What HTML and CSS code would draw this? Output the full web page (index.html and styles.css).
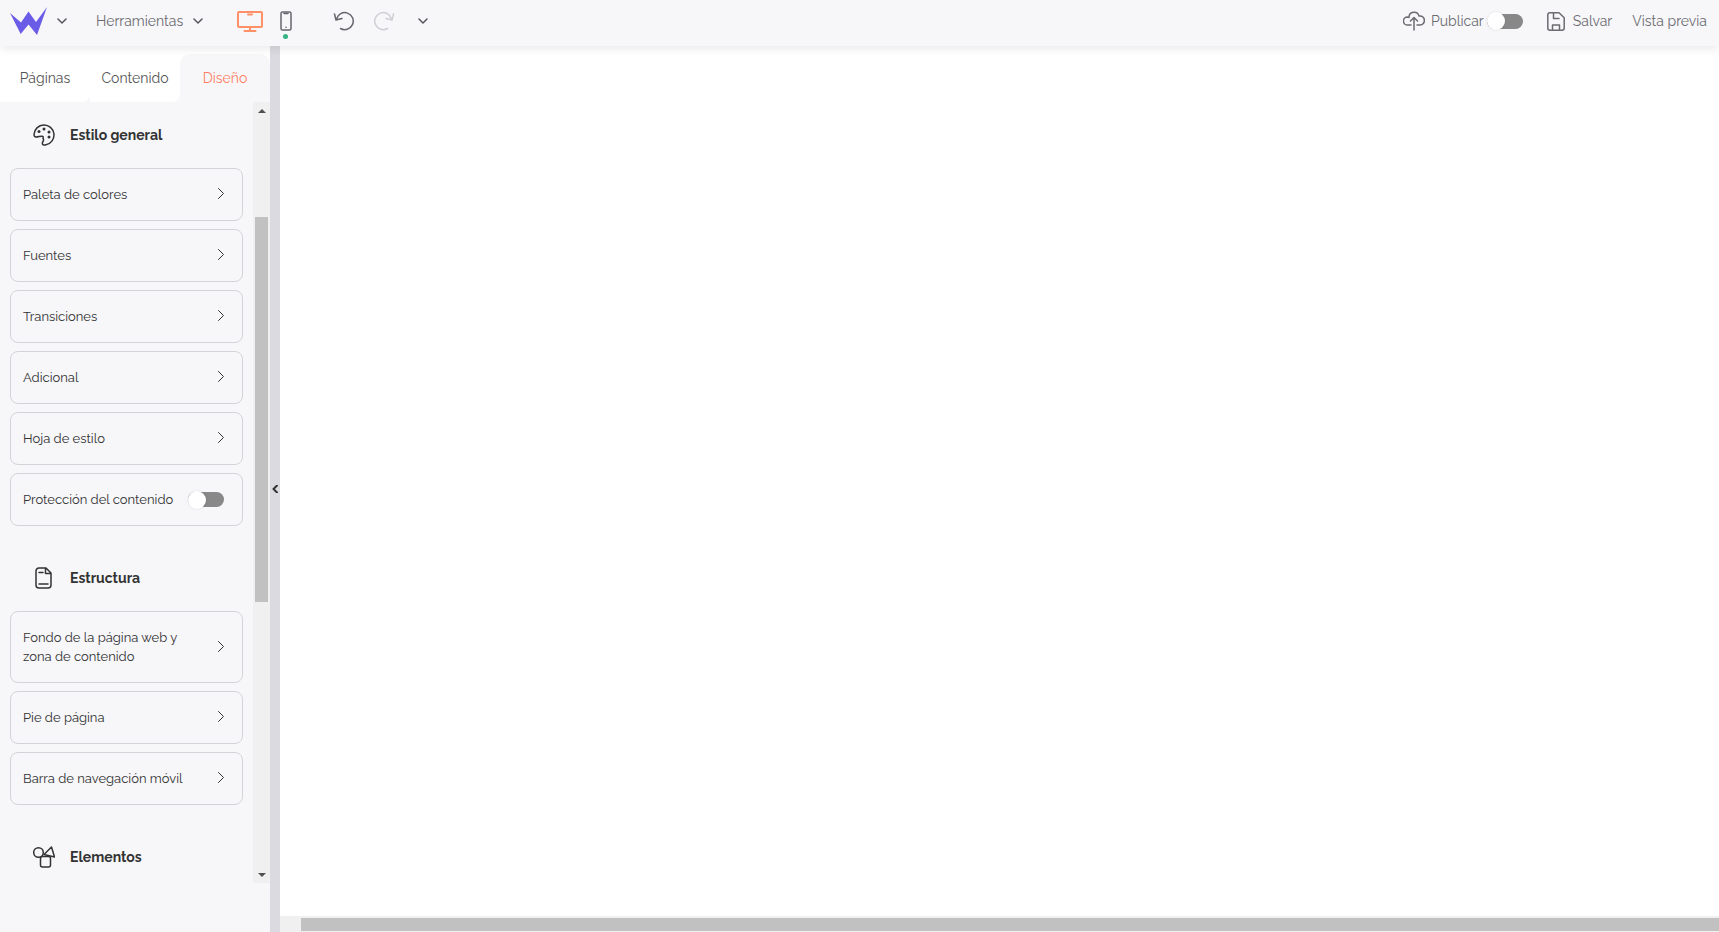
FILE: index.html
```html
<!DOCTYPE html>
<html lang="es">
<head>
    <meta charset="UTF-8">
    <meta name="viewport" content="width=device-width, initial-scale=1.0">
    <title>Editor</title>
    <link rel="stylesheet" href="styles.css">
</head>
<body>
    <header class="topbar">
        <button class="logo-btn" aria-label="Menú">
            <svg class="logo" width="38" height="28" viewBox="0 0 38 28"><path d="M0 6 L11 15.500 L18.500 4.500 L26 15 L37 0 L27 28 L18.500 17.500 L10.700 27 Z" fill="#6a5ce6"/></svg>
            <svg class="chevron" width="10" height="6" viewBox="0 0 10 6"><path d="M1 1l4 4 4-4"/></svg>
        </button>
        <button class="tools-btn">
            <span>Herramientas</span>
            <svg class="chevron" width="10" height="6" viewBox="0 0 10 6"><path d="M1 1l4 4 4-4"/></svg>
        </button>
        <div class="devices">
            <button class="device active" aria-label="Escritorio">
                <svg width="26" height="22" viewBox="0 0 26 22"><rect x="1" y="2" width="24" height="15" rx="1"/><path d="M11 4.500h4M13 17v4M7.500 21h11"/></svg>
            </button>
            <button class="device" aria-label="Móvil">
                <svg width="12" height="22" viewBox="0 0 12 22"><rect x="1" y="2" width="10" height="18" rx="1.500"/><path d="M4 3.500h4M6 17.300h.1"/></svg>
                <span class="dot"></span>
            </button>
        </div>
        <div class="history">
            <button class="icon-btn" aria-label="Deshacer">
                <svg width="22" height="20" viewBox="0 0 22 20"><path d="M3.500 8A8.500 8.500 0 1 1 7.500 17.500M1.500 3l1.500 6 6-1.500"/></svg>
            </button>
            <button class="icon-btn faded" aria-label="Rehacer">
                <svg width="22" height="20" viewBox="0 0 22 20"><path d="M18.500 8A8.500 8.500 0 1 0 14.500 17.500M20.500 3l-1.500 6-6-1.500"/></svg>
            </button>
            <button class="icon-btn" aria-label="Historial">
                <svg class="chevron" width="10" height="6" viewBox="0 0 10 6"><path d="M1 1l4 4 4-4"/></svg>
            </button>
        </div>
        <div class="actions">
            <label class="publish">
                <svg width="22" height="20" viewBox="0 0 22 20"><path d="M8 14H5A4 4 0 0 1 4 6C5 6 5.500 6 6 6.500C6 0 14.500-.5 16 5C23 4 23 14 17 14H14M11 19V7M7.500 10L11 6.500l3.500 3.500"/></svg>
                <span>Publicar</span>
                <input type="checkbox" class="switch" role="switch">
            </label>
            <button class="save">
                <svg width="18" height="19" viewBox="0 0 18 19"><path d="M3 .8h9l5.200 5V16a2.200 2.200 0 0 1-2.200 2.200H3A2.200 2.200 0 0 1 .8 16V3A2.200 2.200 0 0 1 3 .8ZM6.500 1v5.500H12M5.500 18v-5h7v5"/></svg>
                <span>Salvar</span>
            </button>
            <button>Vista previa</button>
        </div>
    </header>

    <div class="workspace">
        <aside class="sidebar">
            <nav class="tabs">
                <a href="#paginas" class="tab">Páginas</a>
                <a href="#contenido" class="tab">Contenido</a>
                <a href="#diseno" class="tab active">Diseño</a>
            </nav>
            <div class="panel">
                <div class="panel-content">
                    <section class="group">
                        <h2>
                            <svg width="22" height="22" viewBox="0 0 22 22"><path d="M10 14.500c1-3-1.500-2.500-4-2C2.500 13.500 1 13 1 10.500A10 10 0 1 1 13 20.800c-3 .7-4-.3-3.500-2.300 1-1.500 1.500-3 .5-4Z"/><circle class="fill" cx="6" cy="7.500" r="1.500"/><circle class="fill" cx="11" cy="5" r="1.500"/><circle class="fill" cx="16" cy="8" r="1.500"/><circle class="fill" cx="16" cy="13" r="1.500"/></svg>
                            Estilo general
                        </h2>
                        <button class="item">Paleta de colores<svg class="arrow" width="6" height="11" viewBox="0 0 6 11"><path d="M.5.5l5 5-5 5"/></svg></button>
                        <button class="item">Fuentes<svg class="arrow" width="6" height="11" viewBox="0 0 6 11"><path d="M.5.5l5 5-5 5"/></svg></button>
                        <button class="item">Transiciones<svg class="arrow" width="6" height="11" viewBox="0 0 6 11"><path d="M.5.5l5 5-5 5"/></svg></button>
                        <button class="item">Adicional<svg class="arrow" width="6" height="11" viewBox="0 0 6 11"><path d="M.5.5l5 5-5 5"/></svg></button>
                        <button class="item">Hoja de estilo<svg class="arrow" width="6" height="11" viewBox="0 0 6 11"><path d="M.5.5l5 5-5 5"/></svg></button>
                        <label class="item">Protección del contenido<input type="checkbox" class="switch" role="switch"></label>
                    </section>
                    <section class="group">
                        <h2>
                            <svg width="22" height="22" viewBox="0 0 22 22"><path d="M6 1h7l5 5v12a3 3 0 0 1-3 3H6a3 3 0 0 1-3-3V4a3 3 0 0 1 3-3ZM12.500 1v5.500H18M6 5.500h4M6 17h9"/></svg>
                            Estructura
                        </h2>
                        <button class="item">Fondo de la página web y zona de contenido<svg class="arrow" width="6" height="11" viewBox="0 0 6 11"><path d="M.5.5l5 5-5 5"/></svg></button>
                        <button class="item">Pie de página<svg class="arrow" width="6" height="11" viewBox="0 0 6 11"><path d="M.5.5l5 5-5 5"/></svg></button>
                        <button class="item">Barra de navegación móvil<svg class="arrow" width="6" height="11" viewBox="0 0 6 11"><path d="M.5.5l5 5-5 5"/></svg></button>
                    </section>
                    <section class="group">
                        <h2>
                            <svg width="22" height="22" viewBox="0 0 22 22"><circle cx="5.500" cy="6.500" r="4.800"/><path d="M18.500 1l3 10L11 8.500Z"/><rect x="7.500" y="10.500" width="10" height="10.500" rx="2"/></svg>
                            Elementos
                        </h2>
                    </section>
                </div>
                <div class="scrollbar vertical">
                    <button class="up" aria-label="Subir"></button>
                    <div class="rail"><div class="thumb"></div></div>
                    <button class="down" aria-label="Bajar"></button>
                </div>
            </div>
        </aside>
        <button class="splitter" aria-label="Contraer panel">
            <svg width="6" height="8" viewBox="0 0 6 8"><path d="M5 0.500L1.500 4 5 7.500"/></svg>
        </button>
        <main class="canvas">
            <div class="page"></div>
            <div class="scrollbar horizontal"><div class="thumb"></div></div>
        </main>
    </div>
</body>
</html>
```
FILE: styles.css
```css
* {
    margin: 0;
    padding: 0;
    box-sizing: border-box;
}

body {
    display: flex;
    flex-direction: column;
    height: 100vh;
    overflow: hidden;
    font-family: Raleway, Lato, sans-serif;
    font-size: 13px;
    color: #333;
    background: #f7f7fa;
}

button {
    border: none;
    background: none;
    font: inherit;
    color: inherit;
    cursor: pointer;
}

a {
    color: inherit;
    text-decoration: none;
}

svg {
    display: block;
    flex-shrink: 0;
    fill: none;
    stroke: currentColor;
    stroke-width: 1.5;
    stroke-linecap: round;
    stroke-linejoin: round;
}

.topbar {
    position: relative;
    z-index: 1;
    display: flex;
    align-items: center;
    height: 46px;
    padding: 0 12px 4px 10px;
    font-size: 14px;
    color: #6b6b70;
    background: #f7f7fa;
    box-shadow: 0 2px 10px rgba(0, 0, 0, 0.1);
}

.topbar button {
    display: flex;
    align-items: center;
}

.logo {
    stroke: none;
}

.logo-btn {
    gap: 9px;
}

.tools-btn {
    gap: 10px;
    margin-left: 29px;
}

.chevron {
    color: #55555d;
}

.devices {
    display: flex;
    gap: 17px;
    margin-left: 34px;
}

.device {
    position: relative;
    color: #66666e;
}

.device.active {
    color: #ff9068;
}

.device.active svg {
    stroke-width: 2;
}

.dot {
    position: absolute;
    top: 24px;
    left: 3px;
    width: 5px;
    height: 5px;
    border-radius: 50%;
    background: #35b384;
}

.history {
    display: flex;
    gap: 18px;
    margin-left: 41px;
}

.icon-btn {
    color: #66666e;
}

.icon-btn .chevron {
    margin-left: 5px;
}

.icon-btn.faded {
    color: #cfcfd4;
}

.actions {
    display: flex;
    align-items: center;
    gap: 20px;
    margin-left: auto;
}

.publish {
    display: flex;
    align-items: center;
    gap: 3px;
    margin-right: 4px;
}

.publish svg {
    margin-right: 3px;
}

.save {
    gap: 8px;
}

/* Toggle */
.switch {
    appearance: none;
    display: flex;
    align-items: center;
    flex-shrink: 0;
    width: 36px;
    height: 15px;
    border-radius: 8px;
    background: #888;
    cursor: pointer;
}

.switch::before {
    content: "";
    width: 18px;
    height: 18px;
    flex-shrink: 0;
    border-radius: 50%;
    background: #fff;
    box-shadow: 0 0 3px rgba(0, 0, 0, 0.1);
}

.workspace {
    display: flex;
    flex: 1;
    min-height: 0;
}

.sidebar {
    display: flex;
    flex-direction: column;
    width: 270px;
    padding-bottom: 49px;
}

.tabs {
    display: flex;
    height: 56px;
    padding-top: 8px;
    background: linear-gradient(#fff 46px, #f7f7fa 46px);
}

.tab {
    flex: 1;
    display: flex;
    align-items: center;
    justify-content: center;
    font-size: 14px;
    color: #555;
    background: #fff;
    border-radius: 0 0 8px 0;
}

.tab.active {
    color: #ff7f63;
    background: #f7f7fa;
    border-radius: 10px 10px 0 0;
}

.panel {
    display: flex;
    flex: 1;
    min-height: 0;
}

.panel-content {
    flex: 1;
    padding: 8px 10px 0;
    overflow: hidden;
}

.group {
    display: flex;
    flex-direction: column;
    gap: 8px;
    margin-bottom: 27px;
}

.group h2 {
    display: flex;
    align-items: center;
    gap: 15px;
    height: 50px;
    padding-left: 23px;
    font-size: 14px;
    font-weight: 700;
}

.group .fill {
    fill: currentColor;
    stroke: none;
}

.item {
    display: flex;
    align-items: center;
    justify-content: space-between;
    gap: 10px;
    width: 100%;
    padding: 16px 18px 16px 12px;
    border: 1px solid #d4d4d8;
    border-radius: 8px;
    line-height: 19px;
    text-align: left;
}

.arrow {
    margin-bottom: 2px;
    stroke-width: 1;
}

.scrollbar {
    display: flex;
    background: #f0f0f0;
}

.scrollbar .thumb {
    background: #c1c1c1;
}

.vertical {
    flex-direction: column;
    width: 17px;
}

.vertical button {
    display: flex;
    align-items: center;
    justify-content: center;
    height: 17px;
}

.vertical button::before {
    content: "";
    border: 4px solid transparent;
}

.vertical .up::before {
    border-top-width: 0;
    border-bottom-color: #505050;
}

.vertical .down::before {
    border-bottom-width: 0;
    border-top-color: #505050;
}

.rail {
    flex: 1;
    display: grid;
    grid-template-rows: 13fr 51fr 35fr;
    padding: 0 2px;
}

.rail .thumb {
    grid-row: 2;
}

.splitter {
    display: flex;
    align-items: center;
    justify-content: center;
    width: 10px;
    background: #dadae0;
}

.splitter svg {
    stroke-width: 2;
}

.canvas {
    flex: 1;
    display: flex;
    flex-direction: column;
    min-width: 0;
    background: #fff;
}

.page {
    flex: 1;
}

.horizontal {
    height: 16px;
    padding: 2px 0 1px 21px;
}

.horizontal .thumb {
    flex: 1;
}
```
